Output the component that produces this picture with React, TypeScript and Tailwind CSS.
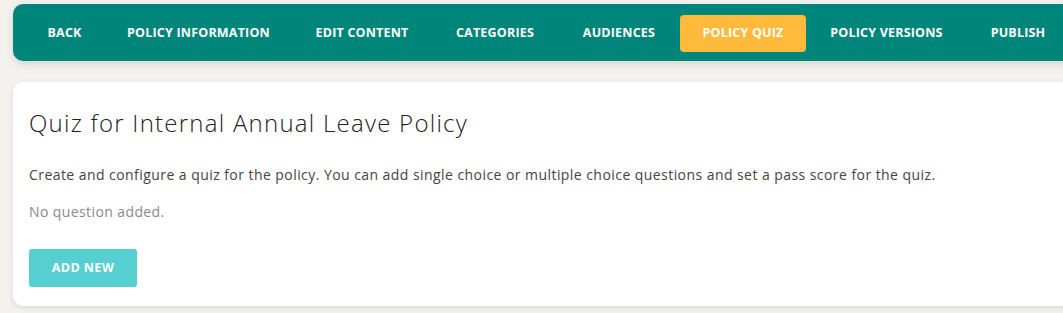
import React from "react";

const items: { label: string; w: string; active?: boolean }[] = [
  { label: "BACK", w: "w-[81px]" },
  { label: "POLICY INFORMATION", w: "w-[187px]" },
  { label: "EDIT CONTENT", w: "w-[140px]" },
  { label: "CATEGORIES", w: "w-[126px]" },
  { label: "AUDIENCES", w: "w-[122px]" },
  { label: "POLICY QUIZ", w: "w-[126px]", active: true },
  { label: "POLICY VERSIONS", w: "w-[161px]" },
  { label: "PUBLISH", w: "w-[102px]" },
];

export default function App() {
  return (
    <div
      className="w-[1063px] h-[313px] overflow-hidden bg-[#f3f2ef] pt-[4px] pl-[13px]"
      style={{ fontFamily: '"Open Sans", "Liberation Sans", sans-serif' }}
    >
      <div className="w-[1080px] flex flex-col gap-[21px]">
        <nav className="h-[57px] bg-[#00857a] rounded-[10px] flex items-center pl-[11px] pt-[1px] shadow-[0_3px_8px_rgba(0,0,0,0.12)]">
          {items.map((it) => (
            <div
              key={it.label}
              className={
                it.w +
                " h-[37px] shrink-0 flex items-center justify-center rounded-[4px] text-[12.5px] font-bold text-white tracking-[0.2px] whitespace-nowrap " +
                (it.active ? "bg-[#ffb93b]" : "")
              }
            >
              {it.label}
            </div>
          ))}
        </nav>
        <section className="h-[224px] bg-white rounded-[10px] shadow-[0_2px_6px_rgba(0,0,0,0.1)] pl-[16px] pt-[26px] flex flex-col items-start">
          <h1 className="text-[24px] font-light text-[#222] leading-[30px] tracking-[1.25px] whitespace-nowrap">
            Quiz for Internal Annual Leave Policy
          </h1>
          <p className="mt-[27px] text-[14px] text-[#444] leading-[20px] tracking-[0.44px] whitespace-nowrap">
            Create and configure a quiz for the policy. You can add single choice or multiple choice questions and set a pass score for the quiz.
          </p>
          <p className="mt-[17px] text-[14px] text-[#8a8a8a] leading-[20px] tracking-[0.4px]">
            No question added.
          </p>
          <button className="mt-[27px] h-[38px] w-[108px] rounded-[3px] bg-[#55cfd0] text-white text-[12.5px] font-bold tracking-[0.4px]">
            ADD NEW
          </button>
        </section>
      </div>
    </div>
  );
}
